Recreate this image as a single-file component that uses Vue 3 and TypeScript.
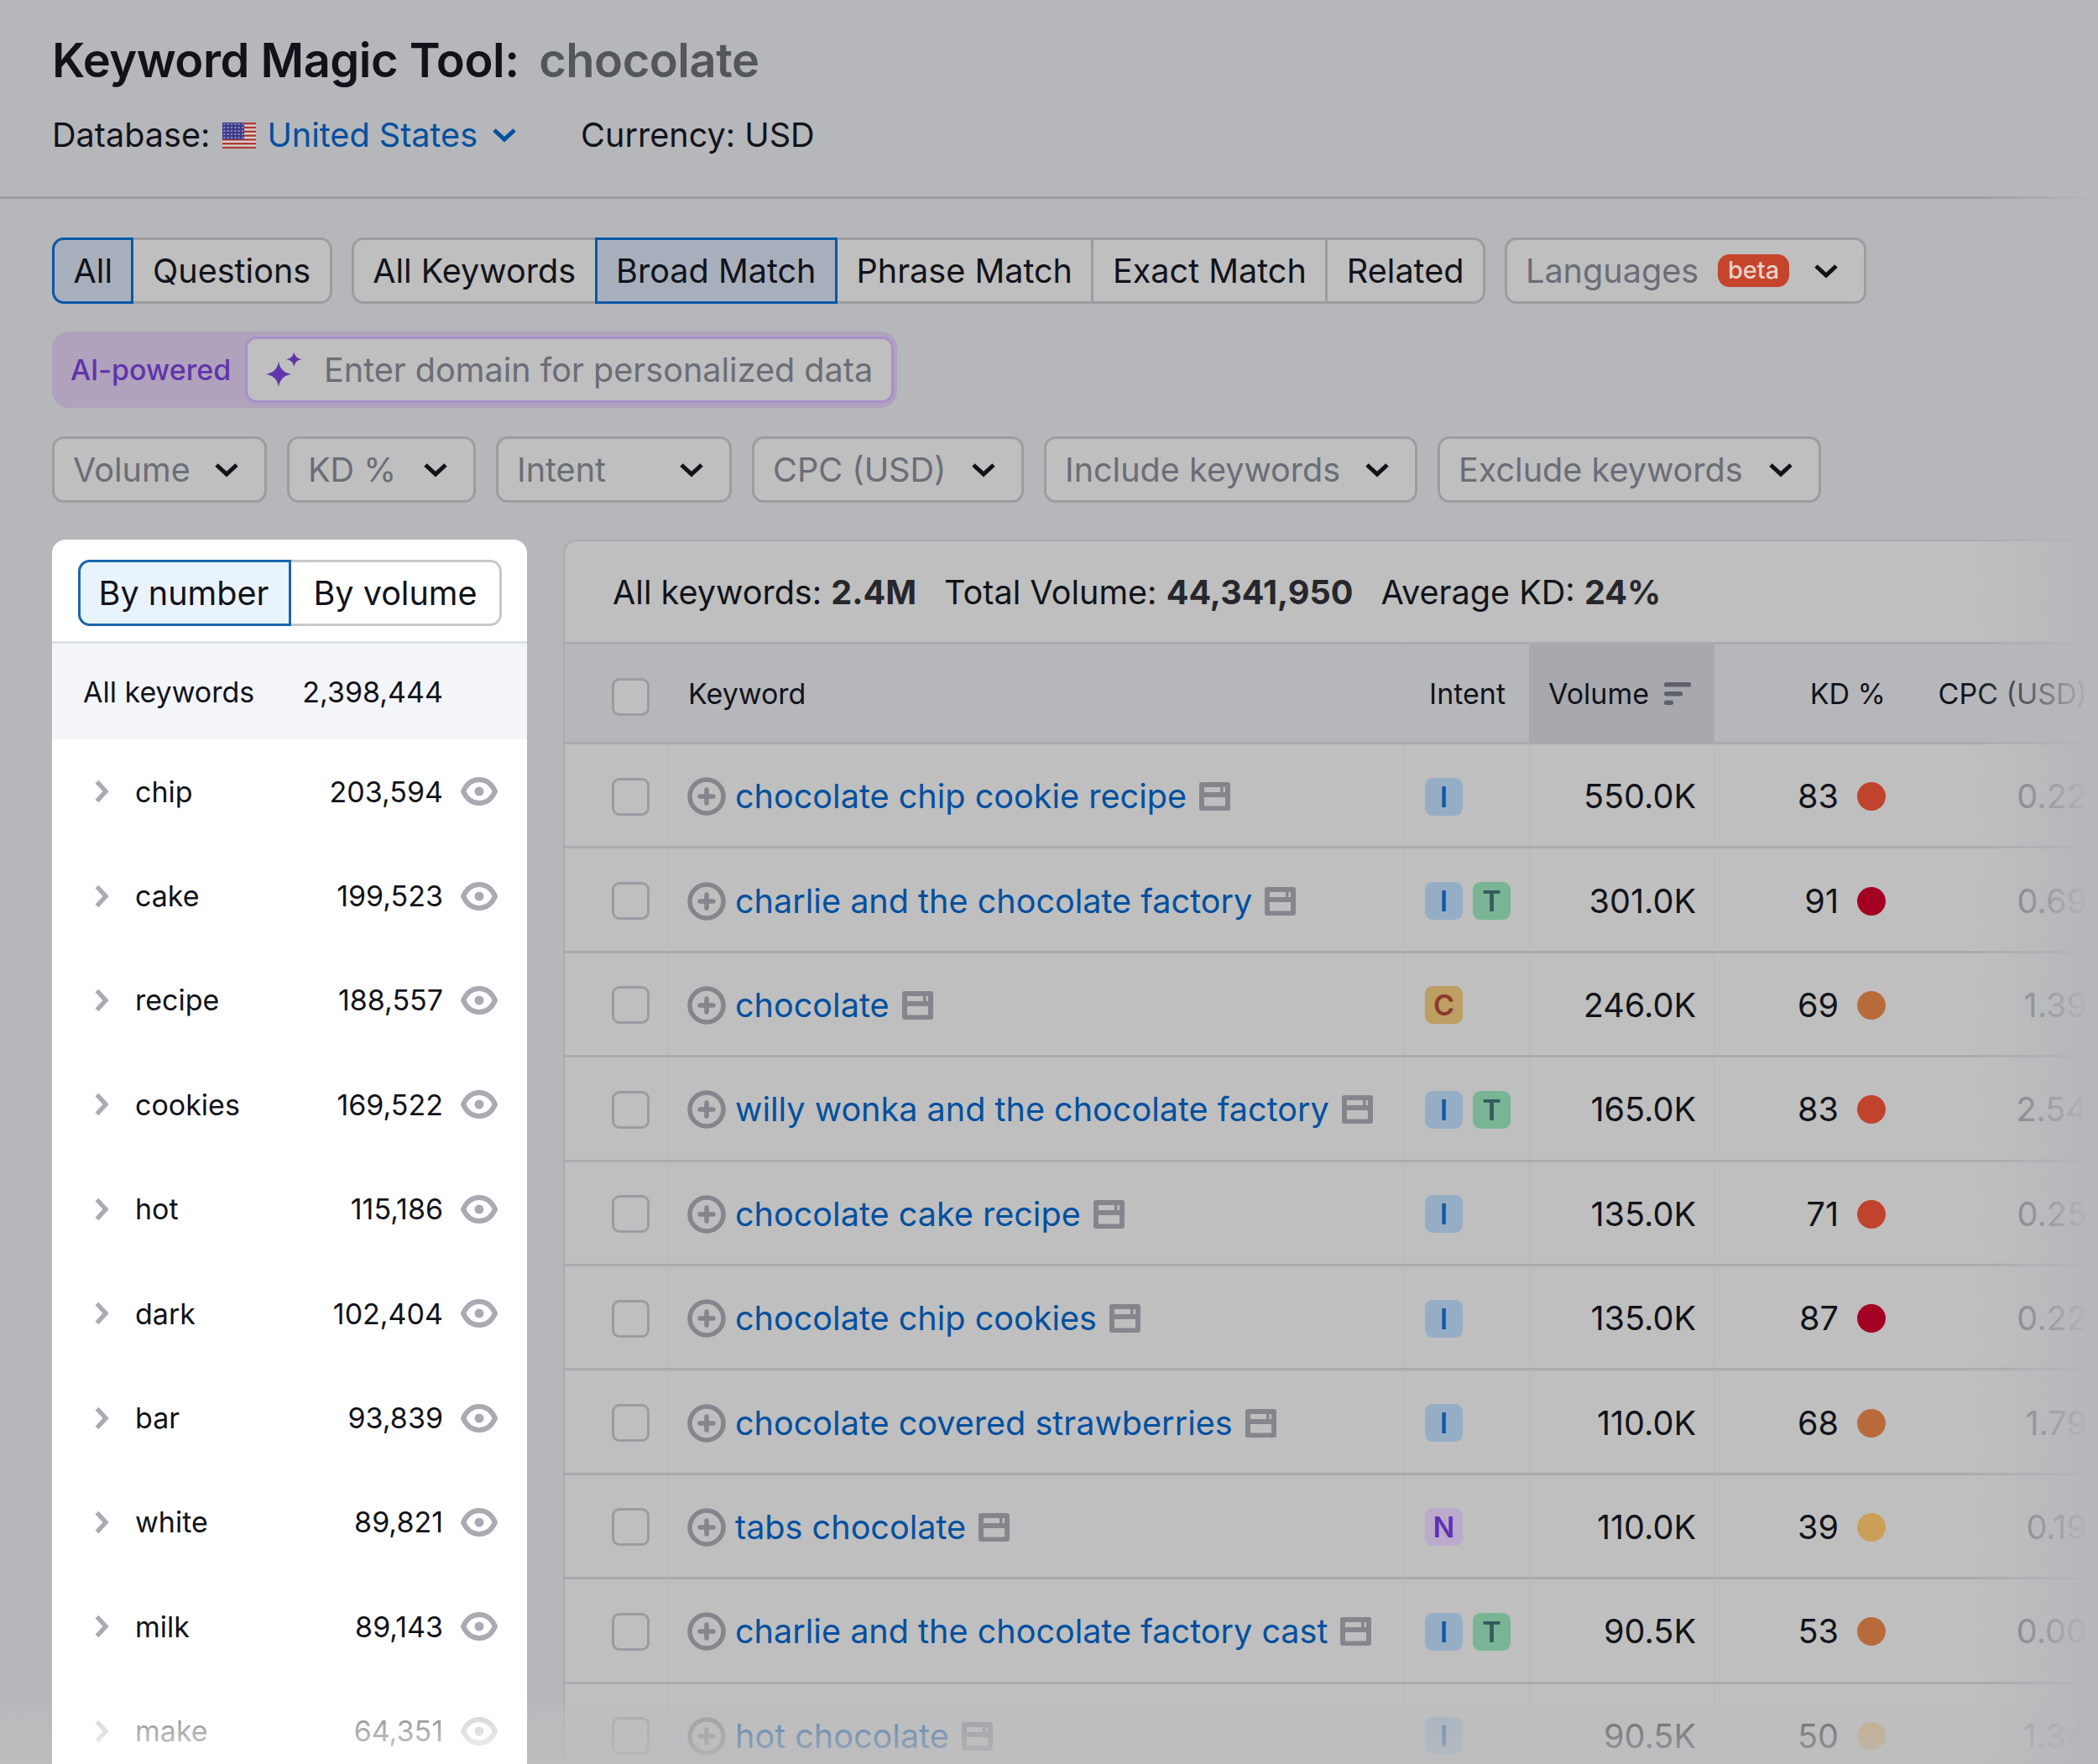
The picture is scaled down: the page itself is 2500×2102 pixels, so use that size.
<script setup lang="ts">
interface SideRow {
  label: string
  count: string
}

interface KeywordRow {
  keyword: string
  intents: string[]
  volume: string
  kd: number
  level: string
  cpc: string
}

const topTabs = ['All', 'Questions']
const matchTabs = ['All Keywords', 'Broad Match', 'Phrase Match', 'Exact Match', 'Related']
const filters = [
  { label: 'Volume', width: 256 },
  { label: 'KD %', width: 225 },
  { label: 'Intent', width: 281 },
  { label: 'CPC (USD)', width: 324 },
  { label: 'Include keywords', width: 445 },
  { label: 'Exclude keywords', width: 457 }
]

const sideRows: SideRow[] = [
  { label: 'chip', count: '203,594' },
  { label: 'cake', count: '199,523' },
  { label: 'recipe', count: '188,557' },
  { label: 'cookies', count: '169,522' },
  { label: 'hot', count: '115,186' },
  { label: 'dark', count: '102,404' },
  { label: 'bar', count: '93,839' },
  { label: 'white', count: '89,821' },
  { label: 'milk', count: '89,143' },
  { label: 'make', count: '64,351' }
]

const rows: KeywordRow[] = [
  { keyword: 'chocolate chip cookie recipe', intents: ['I'], volume: '550.0K', kd: 83, level: 'hard', cpc: '0.22' },
  { keyword: 'charlie and the chocolate factory', intents: ['I', 'T'], volume: '301.0K', kd: 91, level: 'hardest', cpc: '0.69' },
  { keyword: 'chocolate', intents: ['C'], volume: '246.0K', kd: 69, level: 'mid', cpc: '1.39' },
  { keyword: 'willy wonka and the chocolate factory', intents: ['I', 'T'], volume: '165.0K', kd: 83, level: 'hard', cpc: '2.54' },
  { keyword: 'chocolate cake recipe', intents: ['I'], volume: '135.0K', kd: 71, level: 'hard', cpc: '0.25' },
  { keyword: 'chocolate chip cookies', intents: ['I'], volume: '135.0K', kd: 87, level: 'hardest', cpc: '0.22' },
  { keyword: 'chocolate covered strawberries', intents: ['I'], volume: '110.0K', kd: 68, level: 'mid', cpc: '1.79' },
  { keyword: 'tabs chocolate', intents: ['N'], volume: '110.0K', kd: 39, level: 'easy', cpc: '0.19' },
  { keyword: 'charlie and the chocolate factory cast', intents: ['I', 'T'], volume: '90.5K', kd: 53, level: 'mid', cpc: '0.00' },
  { keyword: 'hot chocolate', intents: ['I'], volume: '90.5K', kd: 50, level: 'easy', cpc: '1.34' }
]

// flag stripes, one red bar every 4.8 units
const flagStripes = [0, 4.8, 9.6, 14.4, 19.2, 24, 28.8]
</script>

<template>
  <div class="page">
    <header class="head">
      <h1 class="title">Keyword Magic Tool: <span class="query">chocolate</span></h1>
      <div class="meta">
        <span>Database:</span>
        <svg class="flag" viewBox="0 0 40 31">
          <defs>
            <pattern id="stars" width="4.4" height="4" patternUnits="userSpaceOnUse">
              <circle cx="2.200" cy="2" r="1.100" fill="#a9a3c6" />
            </pattern>
          </defs>
          <rect width="40" height="31" fill="#d8d3d0" />
          <rect v-for="y in flagStripes" :key="y" :y="y" width="40" height="2.400" fill="#b13a38" />
          <rect width="26" height="20" fill="#3a3a8c" />
          <rect width="26" height="20" fill="url(#stars)" />
        </svg>
        <a class="db-link">United States</a>
        <svg class="chev-blue" viewBox="0 0 30 18"><path d="M3 3l12 11L27 3" /></svg>
        <span class="currency">Currency: USD</span>
      </div>
    </header>

    <section class="controls">
      <div class="tab-row">
        <div class="seg">
          <button v-for="t in topTabs" :key="t" class="seg-btn" :class="{ active: t === 'All' }">{{ t }}</button>
        </div>
        <div class="seg">
          <button v-for="t in matchTabs" :key="t" class="seg-btn" :class="{ active: t === 'Broad Match' }">{{ t }}</button>
        </div>
        <button class="select lang">
          <span>Languages</span>
          <span class="beta">beta</span>
          <svg class="chev" viewBox="0 0 30 18"><path d="M3 3l12 11L27 3" /></svg>
        </button>
      </div>

      <div class="ai-box">
        <span class="ai-label">AI-powered</span>
        <div class="ai-input">
          <svg class="sparkle" viewBox="0 0 40 40">
            <path d="M14 11c1.500 8.500 5.500 12.500 14 14-8.500 1.500-12.500 5.500-14 14-1.500-8.500-5.500-12.500-14-14 8.500-1.500 12.500-5.500 14-14z" />
            <path d="M31 0c.9 5.200 3.300 7.600 8.500 8.500-5.200.9-7.600 3.300-8.500 8.500-.9-5.200-3.300-7.600-8.500-8.500C27.700 7.600 30.100 5.200 31 0z" />
          </svg>
          <span>Enter domain for personalized data</span>
        </div>
      </div>

      <div class="filter-row">
        <button v-for="f in filters" :key="f.label" class="select" :style="{ width: f.width + 'px' }">
          <span>{{ f.label }}</span>
          <svg class="chev" viewBox="0 0 30 18"><path d="M3 3l12 11L27 3" /></svg>
        </button>
      </div>
    </section>

    <div class="body">
      <aside class="side">
        <div class="side-top">
          <div class="toggle">
            <button class="toggle-btn on">By number</button>
            <button class="toggle-btn">By volume</button>
          </div>
        </div>
        <div class="side-all">
          <span>All keywords</span>
          <span>2,398,444</span>
        </div>
        <div v-for="r in sideRows" :key="r.label" class="side-row">
          <svg class="chev-right" viewBox="0 0 18 28"><path d="M3.500 2.500L14 14 3.500 25.500" /></svg>
          <span class="side-label">{{ r.label }}</span>
          <span class="side-count">{{ r.count }}</span>
          <svg class="eye" viewBox="0 0 44 34">
            <path d="M3 17C7 8 14 3 22 3s15 5 19 14c-4 9-11 14-19 14S7 26 3 17z" />
            <circle cx="22" cy="17" r="5.500" />
          </svg>
        </div>
        <div class="side-fade"></div>
      </aside>

      <main class="table-wrap">
        <div class="stats">
          <span>All keywords: <b>2.4M</b></span>
          <span>Total Volume: <b>44,341,950</b></span>
          <span>Average KD: <b>24%</b></span>
        </div>
        <div class="grid-row grid-head">
          <div class="cell cell-check"><span class="check"></span></div>
          <div class="cell cell-kw">Keyword</div>
          <div class="cell cell-intent">Intent</div>
          <div class="cell cell-vol sorted">
            Volume
            <svg class="sort" viewBox="0 0 32 27">
              <rect width="32" height="5.500" rx="2.500" />
              <rect y="11" width="22" height="5.500" rx="2.500" />
              <rect y="21.500" width="11" height="5.500" rx="2.500" />
            </svg>
          </div>
          <div class="cell cell-kd">KD %</div>
          <div class="cell cell-cpc">CPC (USD)</div>
        </div>
        <div v-for="r in rows" :key="r.keyword" class="grid-row data-row">
          <div class="cell cell-check"><span class="check"></span></div>
          <div class="cell cell-kw">
            <svg class="plus" viewBox="0 0 46 46">
              <circle cx="23" cy="23" r="20" />
              <path d="M23 15v16M15 23h16" />
            </svg>
            <a class="kw-link">{{ r.keyword }}</a>
            <svg class="serp" viewBox="0 0 37 34">
              <path fill-rule="evenodd" d="M3 0h31a3 3 0 0 1 3 3v28a3 3 0 0 1-3 3H3a3 3 0 0 1-3-3V3a3 3 0 0 1 3-3zm3 6v6h25V6H6zm0 12v10.500h25V18H6z" />
              <rect x="25" y="6" width="3.500" height="6" />
            </svg>
          </div>
          <div class="cell cell-intent">
            <span v-for="i in r.intents" :key="i" class="badge" :class="'badge-' + i">{{ i }}</span>
          </div>
          <div class="cell cell-vol">{{ r.volume }}</div>
          <div class="cell cell-kd">
            <span class="kd-num">{{ r.kd }}</span>
            <span class="dot" :class="r.level"></span>
          </div>
          <div class="cell cell-cpc cpc-val">{{ r.cpc }}</div>
        </div>
      </main>
    </div>

    <div class="fade-bottom"></div>
    <div class="fade-right"></div>
  </div>
</template>

<style>
html,
body {
  margin: 0;
  background: #b6b7bb;
}
</style>

<style scoped>
.page {
  position: relative;
  width: 2500px;
  height: 2102px;
  overflow: hidden;
  background: #b6b7bb;
  color: #12131a;
  font-family: Inter, "Liberation Sans", sans-serif;
  font-size: 39.6px;
}

button {
  font: inherit;
  color: inherit;
  background: none;
  margin: 0;
}

.head {
  height: 197px;
  padding: 37px 62px 0;
  border-bottom: 3px solid #9c9da2;
}

.title {
  margin: 0;
  font-size: 56px;
  line-height: 70px;
  font-weight: 600;
  letter-spacing: -0.5px;
}

.query {
  margin-left: 10px;
  color: #54565d;
}

.meta {
  display: flex;
  align-items: center;
  margin-top: 30px;
  height: 48px;
}

.flag {
  width: 40px;
  height: 31px;
  margin: 0 13px 0 15px;
}

.db-link {
  color: #00509f;
}

.chev-blue {
  width: 30px;
  height: 18px;
  margin-left: 17px;
}

.chev-blue path,
.chev path {
  fill: none;
  stroke-width: 5;
  stroke: #12131a;
}

.chev-blue path {
  stroke: #00509f;
}

.currency {
  margin-left: 76px;
}

.controls {
  padding: 46px 62px 0;
}

.tab-row {
  display: flex;
  gap: 23px;
}

.filter-row {
  display: flex;
  gap: 24px;
}

.seg {
  display: flex;
  height: 79px;
}

.seg-btn {
  position: relative;
  box-sizing: border-box;
  height: 79px;
  padding: 0 22.5px;
  border: 3px solid #9c9da2;
  border-left-width: 0;
  background: #bfbfbf;
  white-space: nowrap;
}

.seg-btn:first-child {
  border-left-width: 3px;
  border-radius: 14px 0 0 14px;
}

.seg-btn:last-child {
  border-radius: 0 14px 14px 0;
}

.seg-btn.active {
  background: #a8afbc;
  border-color: #0a58a4;
  border-left-width: 3px;
  margin-left: -3px;
}

.seg-btn.active:first-child {
  margin-left: 0;
}

.select {
  display: flex;
  align-items: center;
  justify-content: space-between;
  box-sizing: border-box;
  height: 79px;
  padding: 0 30px 0 22px;
  border: 3px solid #9c9da2;
  border-radius: 14px;
  background: #bfbfbf;
  color: #6b6d77;
  white-space: nowrap;
}

.chev {
  width: 30px;
  height: 18px;
  flex: none;
}

.lang {
  width: 431px;
  justify-content: flex-start;
}

.lang .chev {
  margin-left: auto;
}

.beta {
  box-sizing: border-box;
  width: 85px;
  height: 39px;
  line-height: 37px;
  margin-left: 23px;
  border-radius: 14px;
  background: #c5442c;
  color: #e8d2c8;
  font-size: 29px;
  font-weight: 500;
  text-align: center;
}

.ai-box {
  display: flex;
  align-items: center;
  box-sizing: border-box;
  width: 1007px;
  height: 91px;
  margin-top: 33px;
  padding: 0 4px 0 22px;
  border-radius: 20px;
  background: #b0a2bd;
}

.ai-label {
  color: #5f35ab;
  font-size: 34px;
  font-weight: 500;
  width: 208px;
  white-space: nowrap;
}

.ai-input {
  display: flex;
  align-items: center;
  box-sizing: border-box;
  flex: 1;
  height: 79px;
  border: 3px solid #a98fca;
  border-radius: 14px;
  background: #bfbfbf;
  color: #6b6d77;
  white-space: nowrap;
}

.sparkle {
  width: 43px;
  height: 43px;
  margin: 0 26px 0 22px;
  fill: #5f35ab;
}

.filter-row {
  margin-top: 34px;
}

.filter-row .select {
  flex: none;
}

.body {
  display: flex;
  gap: 43px;
  padding: 44px 0 0 62px;
}

.side {
  position: relative;
  z-index: 2;
  flex: none;
  width: 566px;
  height: 1500px;
  border-radius: 16px 16px 0 0;
  background: #fff;
  font-size: 34px;
  overflow: hidden;
}

.side-top {
  box-sizing: border-box;
  height: 124px;
  padding: 24px 31px 0;
  border-bottom: 3px solid #dde1e8;
}

.toggle {
  display: flex;
  width: 505px;
  height: 79px;
}

.toggle-btn {
  flex: 1;
  box-sizing: border-box;
  border: 3px solid #c6c8cd;
  border-left-width: 0;
  border-radius: 0 14px 14px 0;
  font-size: 39.6px;
  white-space: nowrap;
  padding: 0;
}

.toggle-btn.on {
  flex: none;
  width: 254px;
  padding-right: 2px;
  border: 3px solid #1a65ae;
  border-radius: 14px 0 0 14px;
  background: #e9f3fd;
}

.side-all {
  display: flex;
  justify-content: space-between;
  height: 114px;
  align-items: center;
  box-sizing: border-box;
  padding: 0 100px 0 37px;
  background: #f4f5f9;
}

.side-row {
  display: flex;
  align-items: center;
  height: 124.4px;
  padding-left: 50px;
}

.chev-right {
  width: 18px;
  height: 28px;
  flex: none;
}

.chev-right path {
  fill: none;
  stroke: #a9abb3;
  stroke-width: 5.5;
}

.side-label {
  margin-left: 31px;
}

.side-count {
  margin-left: auto;
}

.eye {
  width: 44px;
  height: 34px;
  flex: none;
  margin: 0 35px 0 21px;
}

.eye path {
  fill: none;
  stroke: #a9abb3;
  stroke-width: 6;
}

.eye circle {
  fill: #a9abb3;
}

.side-fade {
  position: absolute;
  left: 0;
  right: 0;
  top: 1387px;
  height: 72px;
  background: linear-gradient(to bottom, rgba(255, 255, 255, 0.35), rgba(255, 255, 255, 0.55) 20%, rgba(255, 255, 255, 0.8) 85%, #fff);
}

.table-wrap {
  flex: none;
  width: 1829px;
  box-sizing: border-box;
  height: 1500px;
  border-radius: 16px 0 0 0;
  border-left: 2px solid #aaabb0;
  border-top: 2px solid #aaabb0;
  background: #bfbfbf;
}

.stats {
  display: flex;
  align-items: center;
  gap: 33px;
  box-sizing: border-box;
  height: 123px;
  padding: 2px 0 0 57px;
  border-bottom: 3px solid #aaabb0;
}

.stats b {
  font-weight: 700;
  color: #26272d;
}

.grid-row {
  display: grid;
  grid-template-columns: 123px 877px 149px 221px 217px 240px;
  height: 124.4px;
  box-sizing: border-box;
  border-bottom: 3px solid #aaabb0;
}

.grid-head {
  height: 119px;
  background: #b6b7bb;
  font-size: 34px;
}

.cell {
  display: flex;
  align-items: center;
  box-sizing: border-box;
  min-width: 0;
  white-space: nowrap;
}

.data-row .cell {
  padding-top: 3px;
}

.cell-check {
  padding-left: 56px;
}

.grid-head .cell-check {
  padding-top: 9px;
}

.check {
  box-sizing: border-box;
  width: 45px;
  height: 45px;
  border: 3px solid #9b9ca3;
  border-radius: 9px;
  background: #bfbfbf;
}

.cell-kw {
  padding-left: 22px;
  border-left: 1px solid #b8b8ba;
}

.grid-head .cell-kw {
  border-left: none;
  padding-left: 24px;
}

.plus {
  width: 46px;
  height: 46px;
  flex: none;
  margin-right: 11px;
}

.plus circle,
.plus path {
  fill: none;
  stroke: #84858d;
  stroke-width: 5.5;
}

.plus path {
  stroke-linecap: round;
}

.kw-link {
  color: #00509f;
}

.serp {
  width: 37px;
  height: 34px;
  flex: none;
  margin-left: 15px;
  fill: #85868d;
}

.cell-intent {
  gap: 12px;
  padding-left: 24px;
  border-left: 1px solid #b8b8ba;
}

.grid-head .cell-intent {
  padding-left: 29px;
  border-left-color: #b2b3b7;
}

.badge {
  box-sizing: border-box;
  width: 45px;
  height: 45px;
  border-radius: 9px;
  line-height: 45px;
  text-align: center;
  font-size: 34px;
  font-weight: 600;
}

.badge-I {
  background: #96aec5;
  color: #0f5aa8;
}

.badge-T {
  background: #79b595;
  color: #35585f;
}

.badge-C {
  background: #bd9f63;
  color: #8a3a2c;
}

.badge-N {
  background: #bcaacd;
  color: #5f33b0;
}

.cell-vol {
  justify-content: flex-end;
  padding-right: 21px;
  border-left: 1px solid #b8b8ba;
  border-right: 1px solid #b8b8ba;
}

.sorted {
  justify-content: flex-start;
  padding-left: 23px;
  padding-right: 0;
  background: #a8a9ae;
  border: none;
}

.sort {
  width: 32px;
  height: 27px;
  margin-left: 18px;
  fill: #5e6068;
}

.cell-kd {
  justify-content: flex-end;
  padding-right: 13px;
}

.kd-num {
  margin-right: 22px;
}

.dot {
  width: 34px;
  height: 34px;
  border-radius: 50%;
}

.dot.hardest {
  background: #a30024;
}

.dot.hard {
  background: #bf432d;
}

.dot.mid {
  background: #b86b3a;
}

.dot.easy {
  background: #cc9f58;
}

.cell-cpc {
  justify-content: flex-end;
  padding-right: 13px;
}

.cpc-val {
  color: #70717a;
}

.fade-bottom {
  position: absolute;
  left: 0;
  right: 0;
  bottom: 0;
  height: 72px;
  background: linear-gradient(to bottom, rgba(189, 189, 191, 0.35), rgba(189, 189, 191, 0.55) 20%, rgba(189, 189, 191, 0.78) 85%, rgba(189, 189, 191, 0.95));
  pointer-events: none;
}

.fade-right {
  position: absolute;
  top: 0;
  bottom: 0;
  right: 0;
  width: 150px;
  background: linear-gradient(to right, rgba(182, 183, 187, 0), #b6b7bb 95%);
  pointer-events: none;
}
</style>
